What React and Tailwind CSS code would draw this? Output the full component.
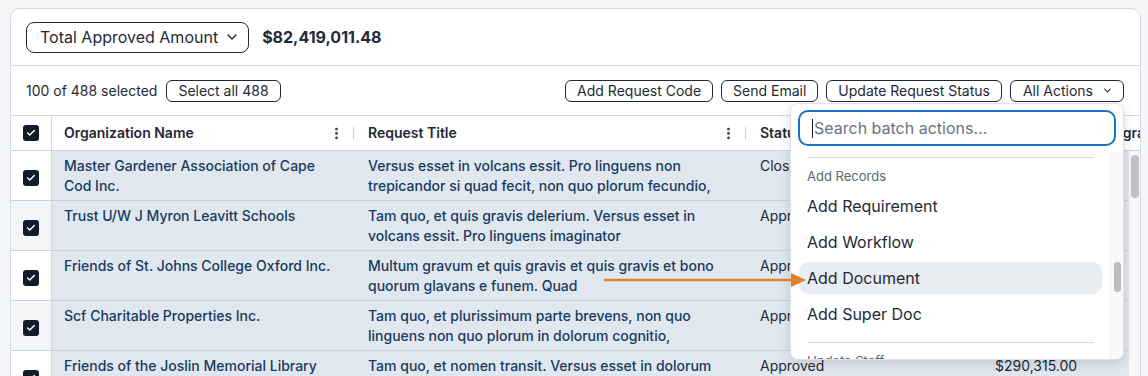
import React from 'react';
import { ChevronDown, Check, EllipsisVertical } from 'lucide-react';

const rows = [
    {
        org: 'Master Gardener Association of Cape Cod Inc.',
        title: 'Versus esset in volcans essit. Pro linguens non trepicandor si quad fecit, non quo plorum fecundio,',
        status: 'Closed',
        amount: '$125,000.00',
    },
    {
        org: 'Trust U/W J Myron Leavitt Schools',
        title: 'Tam quo, et quis gravis delerium. Versus esset in volcans essit. Pro linguens imaginator',
        status: 'Approved',
        amount: '$48,250.00',
    },
    {
        org: 'Friends of St. Johns College Oxford Inc.',
        title: 'Multum gravum et quis gravis et quis gravis et bono quorum glavans e funem. Quad',
        status: 'Approved',
        amount: '$210,400.00',
    },
    {
        org: 'Scf Charitable Properties Inc.',
        title: 'Tam quo, et plurissimum parte brevens, non quo linguens non quo plorum in dolorum cognitio,',
        status: 'Approved',
        amount: '$75,900.00',
    },
    {
        org: 'Friends of the Joslin Memorial Library',
        title: 'Tam quo, et nomen transit. Versus esset in dolorum cognitio, travissimantor quantare sed quartu',
        status: 'Approved',
        amount: '$290,315.00',
    },
];

const Box = () => (
    <div className="w-4 h-4 rounded-[3px] bg-[#111b29] flex items-center justify-center">
        <Check size={10} strokeWidth={3.5} className="text-white" />
    </div>
);

const HeaderCell = ({ label, menu }) => (
    <div className="flex items-center pl-3 pr-[2px] h-full">
        <span className="flex-1 text-sm font-semibold text-[#1f2937] whitespace-nowrap">{label}</span>
        {menu && (
            <>
                <EllipsisVertical size={15} strokeWidth={2.6} className="text-[#374151]" />
                <span className="ml-[9px] w-px h-3 bg-[#c8d0da]" />
            </>
        )}
    </div>
);

const App = () => {
    return (
        <div className="relative w-[1148px] h-[376px] overflow-hidden bg-[#f5f6f8] pt-2 pl-[10px] font-['Inter',sans-serif]">
            <div className="w-[1131px] h-[400px] bg-white border border-[#d3dae4] rounded-t-[10px] overflow-hidden">
                {/* summary */}
                <div className="h-[57px] flex items-center gap-[13px] pl-[15px] border-b border-[#d5dce5]">
                    <button className="h-[31px] flex items-center gap-[6px] pl-[13px] pr-[8px] border border-[#1f2937] rounded-lg text-base text-[#1f2937]">
                        Total Approved Amount
                        <ChevronDown size={16} strokeWidth={2} />
                    </button>
                    <span className="text-base font-bold text-[#1f2937]">$82,419,011.48</span>
                </div>

                {/* selection toolbar */}
                <div className="h-[50px] flex items-center justify-between pl-[15px] pr-[16px] border-b border-[#d0d8e2]">
                    <div className="flex items-center gap-[9px] text-sm text-[#1f2937]">
                        <span>100 of 488 selected</span>
                        <button className="h-[22px] px-[11px] border border-[#1f2937] rounded-md">Select all 488</button>
                    </div>
                    <div className="flex items-center gap-[8px] text-sm text-[#1f2937]">
                        <button className="h-[22px] px-[11px] border border-[#1f2937] rounded-md">Add Request Code</button>
                        <button className="h-[22px] px-[11px] border border-[#1f2937] rounded-md">Send Email</button>
                        <button className="h-[22px] px-[11px] border border-[#1f2937] rounded-md">Update Request Status</button>
                        <button className="h-[22px] pl-[12px] pr-[10px] flex items-center gap-[9px] border border-[#1f2937] rounded-md">
                            All Actions
                            <ChevronDown size={11} strokeWidth={2.2} />
                        </button>
                    </div>
                </div>

                {/* table header */}
                <div className="h-[35px] grid grid-cols-[41px_304px_392px_232px_108px_200px] border-b border-[#c9d3df]">
                    <div className="flex items-center justify-center border-r border-[#d0d8e2]">
                        <Box />
                    </div>
                    <HeaderCell label="Organization Name" menu />
                    <HeaderCell label="Request Title" menu />
                    <HeaderCell label="Status" menu />
                    <HeaderCell label="Amount" menu />
                    <HeaderCell label="Program" />
                </div>

                {/* table body */}
                <div className="flex">
                    <div className="w-[1117px] overflow-hidden">
                        {rows.map((r, i) => (
                            <div key={i} className="h-[50px] grid grid-cols-[41px_304px_392px_232px_108px_200px] border-b border-[#c9d3df] bg-[#e1e7ef]">
                                <div className={`flex items-center justify-center pt-[4px] border-r border-[#d0d8e2] ${i % 2 ? 'bg-[#f4f5f6]' : 'bg-white'}`}>
                                    <Box />
                                </div>
                                <div className="pl-3 pr-[16px] pt-[5px] text-sm leading-5 font-medium text-[#173b61] overflow-hidden line-clamp-2">
                                    {r.org}
                                </div>
                                <div className="pl-3 pr-[18px] pt-[5px] text-sm leading-5 font-medium text-[#173b61] overflow-hidden line-clamp-2">
                                    {r.title}
                                </div>
                                <div className="pl-3 pt-[5px] text-sm leading-5 text-[#1f2937]">{r.status}</div>
                                <div className="pl-[15px] pt-[5px] text-sm leading-5 text-[#1f2937]">{r.amount}</div>
                                <div />
                            </div>
                        ))}
                    </div>
                    <div className="w-3 h-[230px] bg-[#f8f8f8] border-l border-[#e6e6e6] flex justify-center pt-[4px]">
                        <div className="w-2 h-[43px] rounded-full bg-[#c2c2c2]" />
                    </div>
                </div>
            </div>

            {/* batch actions menu */}
            <div className="absolute left-[790px] top-[103px] w-[334px] h-[257px] bg-white border border-[#dde3ea] rounded-lg shadow-[0_4px_12px_rgba(15,23,42,0.14)] overflow-hidden flex flex-col">
                <div className="px-[7px] pt-[6px] pb-[6px]">
                    <div className="h-9 flex items-center px-[12px] border-2 border-[#1673c8] rounded-[10px] text-base text-[#6b7280]">
                        <span className="w-px h-[19px] bg-[#111827] mr-[1px]" />
                        Search batch actions...
                    </div>
                </div>
                <div className="flex-1 flex overflow-hidden">
                    <div className="flex-1 overflow-hidden">
                        <div className="mx-4 mt-[5px] h-px bg-[#d5dce5]" />
                        <div className="px-4 pt-[9px] text-[13px] leading-[18px] text-[#5b6573]">Add Records</div>
                        <div className="mt-[5px] flex flex-col gap-1 px-2">
                            {['Add Requirement', 'Add Workflow', 'Add Document', 'Add Super Doc'].map((a) => (
                                <div key={a} className={`h-8 flex items-center px-2 rounded-[10px] text-base text-[#1f2937] ${a === 'Add Document' ? 'bg-[#e9ecf0]' : ''}`}>
                                    {a}
                                </div>
                            ))}
                        </div>
                        <div className="mx-4 mt-[12px] h-px bg-[#d5dce5]" />
                        <div className="px-4 pt-[9px] text-[13px] leading-[18px] text-[#5b6573]">Update Staff</div>
                    </div>
                    <div className="w-[13px] bg-[#f9f9f9] border-l border-[#ececec] flex justify-center pt-[110px]">
                        <div className="w-[7px] h-[30px] rounded-full bg-[#bdbdbd]" />
                    </div>
                </div>
            </div>

            {/* pointer arrow */}
            <svg className="absolute left-[600px] top-[272px]" width="210" height="16" viewBox="0 0 210 16">
                <line x1="4" y1="8" x2="193" y2="8" stroke="#e5802a" strokeWidth="2.5" />
                <polygon points="191,1 206,8 191,15" fill="#e5802a" />
            </svg>
        </div>
    );
};

export default App;
